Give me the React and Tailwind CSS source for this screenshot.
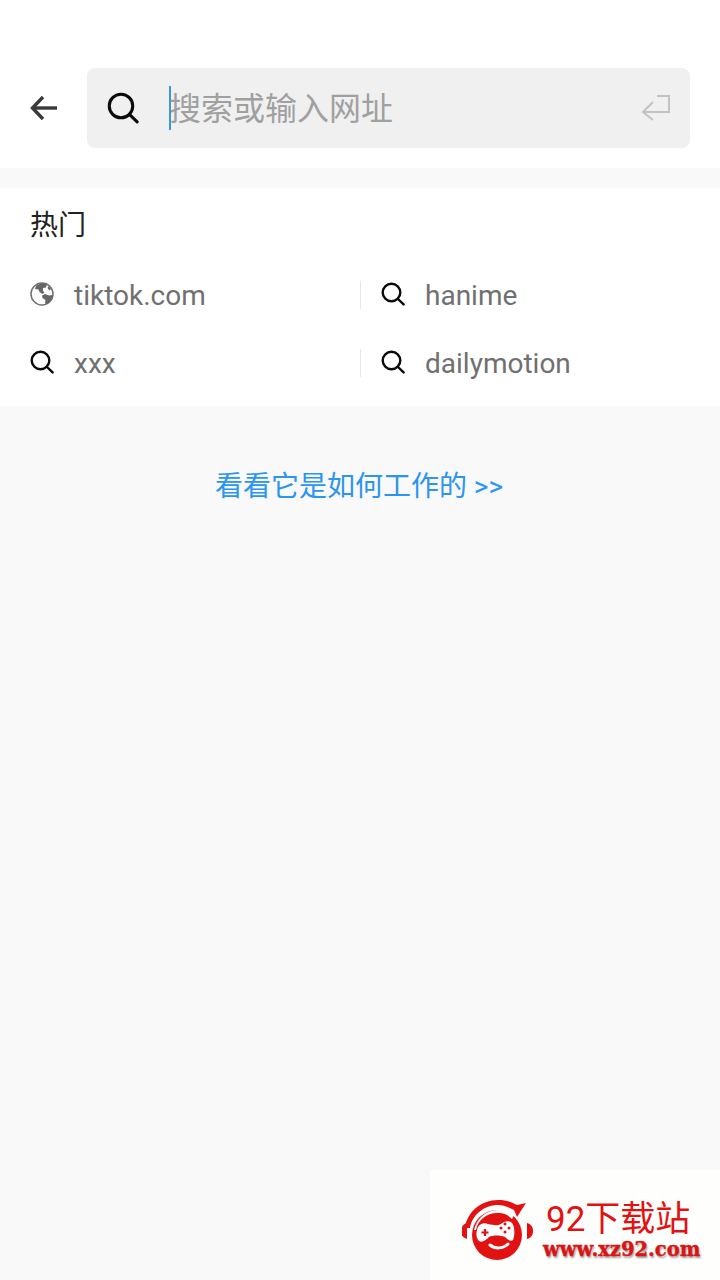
const CJK = '"Roboto", "Noto Sans CJK SC", sans-serif'

function SearchIcon({ size = 24, stroke = 2.4 }) {
  return (
    <svg width={size} height={size} viewBox="0 0 24 24" fill="none" stroke="#0a0a0a" strokeWidth={stroke} strokeLinecap="round">
      <circle cx="10.5" cy="10.5" r="8.8" />
      <path d="M17 17l5.6 5.4" />
    </svg>
  )
}

function GlobeIcon() {
  return (
    <svg width="24" height="24" viewBox="0 0 24 24" fill="#666">
      <circle cx="12" cy="12" r="11" fill="none" stroke="#707070" strokeWidth="1.5" />
      <path d="M6 4C8 1.500 14 .5 17 2.500L16 5.500 13 6 13 9 14.500 10.500 12.500 12 9.500 10 8.500 7.500 5 7Z" />
      <path d="M12 13.500L15 12 19 13.500 22.500 13C22 17 20 20.500 16.500 22L15 21.500 15.500 18 12.500 16Z" />
      <path d="M18.500 4L21 7 19.500 8.500 17.500 6Z" />
    </svg>
  )
}

function HotItem({ icon, label, divider }) {
  return (
    <div className="flex h-[68px] items-center">
      {divider && <div className="mr-5 h-7 w-px bg-[#e6e6e6]" />}
      <div className="-mt-0.5 flex w-6 justify-center">{icon}</div>
      <span className="ml-[20px] mt-0.5 text-[28px] text-[#707070]">{label}</span>
    </div>
  )
}

function Logo() {
  return (
    <svg className="mt-2" width="72" height="62" viewBox="0 0 72 62">
      <path d="M5 25c-4 1-6 4-6 8s2 7 6 8Z" fill="#e21212" />
      <path d="M65 25c4 1 6 4 6 8s-2 7-6 8Z" fill="#e21212" />
      <path d="M3 30C5 14 19 2 36 2c8 0 14 2 19 5l9-2-9 14-3-7C46 9 41 7 36 7 22 7 10 17 8 30Z" fill="#e21212" />
      <circle cx="35" cy="37" r="25" fill="#e21212" />
      <path d="M12 32C15 19 26 11 38 12c5 .4 9 2 12 4l3-1-3 6C46 17 42 15 37 15 26 14 16 21 14 32Z" fill="#fff" />
      <path d="M15 32c1-5 6-8 11-6 5 1 9 2 13 0 3-3 8-4 11-1 3 4 3 12 1 17-2 2-5 0-8-3-5-2-12-2-16 0-3 3-7 6-10 4-3-3-3-7-2-11Z" fill="#fff" />
      <path d="M23 31v7M19.500 34.500h7" stroke="#e21212" strokeWidth="2.200" />
      <circle cx="43" cy="26" r="1.500" fill="#e21212" />
      <circle cx="47" cy="30" r="1.500" fill="#e21212" />
      <circle cx="39" cy="30" r="1.500" fill="#e21212" />
      <circle cx="43" cy="34" r="1.500" fill="#e21212" />
      <path d="M28 47c5 4 13 4 18-1" stroke="#fff" strokeWidth="3" fill="none" strokeLinecap="round" />
    </svg>
  )
}

export default function App() {
  return (
    <div className="relative h-[1280px] w-[720px] overflow-hidden bg-[#f9f9f9]" style={{ fontFamily: CJK }}>
      <div className="flex h-[168px] items-end bg-white pb-5 pl-[30px] pr-[30px]">
        <svg className="mb-[27px] shrink-0" width="27" height="26" viewBox="0 0 27 26" fill="none" stroke="#3a3a3a" strokeWidth="3.400">
          <path d="M27 13H3" />
          <path d="M13 2L2.500 13 13 24" />
        </svg>
        <div className="ml-[30px] flex h-20 flex-1 items-center rounded-lg bg-[#f0f0f0] pl-5 pr-5">
          <SearchIcon size={32} stroke={2.300} />
          <div className="ml-[30px] h-[44px] w-0.5 bg-[#3a98d8]" />
          <span className="-ml-0.5 mt-0.5 flex-1 text-[32px] text-[#a0a0a0]">搜索或输入网址</span>
          <svg width="28" height="26" viewBox="0 0 28 26" fill="none" stroke="#c2c2c2" strokeWidth="2">
            <path d="M15 1h12v16H1" />
            <path d="M11 7L1 17l10 8" />
          </svg>
        </div>
      </div>

      <div className="mt-5 bg-white px-[30px] pb-[9px]">
        <div className="flex h-[73px] items-center pt-0.5 text-[28px] text-[#222]">热门</div>
        <div className="grid grid-cols-[330px_1fr]">
          <HotItem icon={<GlobeIcon />} label="tiktok.com" />
          <HotItem icon={<SearchIcon />} label="hanime" divider />
          <HotItem icon={<SearchIcon />} label="xxx" />
          <HotItem icon={<SearchIcon />} label="dailymotion" divider />
        </div>
      </div>

      <div className="mt-[61px] pr-0.5 text-center text-[28px] leading-10 text-[#2b95f0]">看看它是如何工作的 &gt;&gt;</div>

      <div className="absolute bottom-0 right-0 flex h-[110px] w-[290px] items-center bg-[#fefefc] pl-[32px]">
        <Logo />
        <div className="ml-[12px] mt-[10px] flex flex-col items-start">
          <span className="text-[35px] leading-10 text-[#e21212]">92下载站</span>
          <span
            className="-ml-[3px] text-[19.5px] font-bold leading-5 text-[#d81414] [-webkit-text-stroke:0.4px_#d81414] [text-shadow:1px_2px_2px_#999]"
            style={{ fontFamily: '"DejaVu Serif", serif' }}
          >
            www.xz92.com
          </span>
        </div>
      </div>
    </div>
  )
}
